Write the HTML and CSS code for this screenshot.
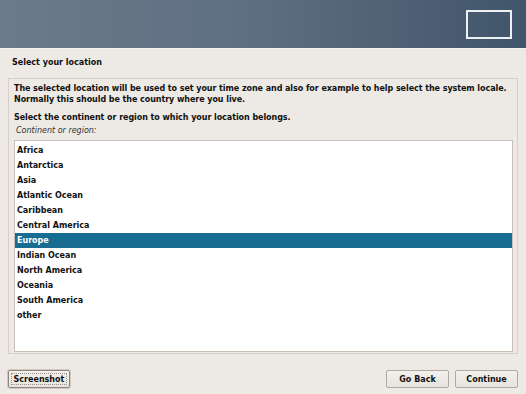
FILE: index.html
```html
<!DOCTYPE html>
<html lang="en">
<head>
  <meta charset="UTF-8">
  <title>Select your location</title>
  <link rel="stylesheet" href="styles.css">
</head>
<body>
  <header class="banner">
    <div class="logo-box"></div>
  </header>

  <h1 class="step-title">Select your location</h1>

  <section class="panel">
    <p class="intro">The selected location will be used to set your time zone and also for example to help select the system locale.<br>Normally this should be the country where you live.</p>
    <p class="question">Select the continent or region to which your location belongs.</p>
    <div class="list-label">Continent or region:</div>
    <ul class="region-list">
      <li>Africa</li>
      <li>Antarctica</li>
      <li>Asia</li>
      <li>Atlantic Ocean</li>
      <li>Caribbean</li>
      <li>Central America</li>
      <li class="selected">Europe</li>
      <li>Indian Ocean</li>
      <li>North America</li>
      <li>Oceania</li>
      <li>South America</li>
      <li>other</li>
    </ul>
  </section>

  <footer class="actions">
    <button class="btn btn-focus"><span>Screenshot</span></button>
    <div class="nav-buttons">
      <button class="btn">Go Back</button>
      <button class="btn">Continue</button>
    </div>
  </footer>
</body>
</html>
```

FILE: styles.css
```css
* {
  box-sizing: border-box;
}

body {
  margin: 0;
  width: 526px;
  height: 394px;
  background: #edeae5;
  color: #111;
  font-family: "DejaVu Sans", sans-serif;
  font-size: 8px;
  font-weight: bold;
  overflow: hidden;
}

.banner {
  height: 49px;
  background: linear-gradient(90deg, #6c7a89 0%, #5f7083 45%, #41556a 100%);
  border-bottom: 1px solid #f6f4f1;
  display: flex;
  justify-content: flex-end;
  align-items: flex-start;
  padding: 10px 14px 0 0;
}

.logo-box {
  width: 46px;
  height: 29px;
  border: 2px solid #eef1f4;
}

.step-title {
  margin: 0;
  font-size: 8px;
  line-height: 11px;
  padding: 8px 0 0 12px;
  height: 29px;
}

.panel {
  margin: 0 8px;
  height: 276px;
  border: 1px solid #d6d0c8;
  padding: 4px 4px 0 5px;
}

.intro {
  margin: 0;
  line-height: 11px;
  white-space: nowrap;
  letter-spacing: -0.06px;
}

.question {
  margin: 7px 0 0;
  line-height: 11px;
  letter-spacing: -0.06px;
}

.list-label {
  font-style: italic;
  font-weight: normal;
  color: #333;
  line-height: 11px;
  padding: 2px 0 0 2px;
}

.region-list {
  list-style: none;
  margin: 4px 0 0;
  height: 212px;
  background: #fff;
  border: 1px solid #c9bfb4;
  padding: 2px 0 0;
}

.region-list li {
  height: 15px;
  line-height: 15px;
  padding-left: 2px;
}

.region-list li.selected {
  background: #176c92;
  color: #fff;
}

.actions {
  display: flex;
  justify-content: space-between;
  padding: 16px 8px 0;
}

.nav-buttons {
  display: flex;
  gap: 6px;
}

.btn {
  height: 18px;
  width: 63px;
  padding: 0;
  font-family: "DejaVu Sans", sans-serif;
  font-size: 8px;
  font-weight: bold;
  color: #111;
  background: linear-gradient(#f3f1ed, #e7e3dd);
  border: 1px solid #b1a99f;
  border-radius: 2px;
}

.btn-focus {
  width: 62px;
  border: 1px solid #8f877d;
  box-shadow: 0 0 0 1px #cfc8be;
  padding: 2px;
}

.btn-focus span {
  display: block;
  height: 100%;
  line-height: 11px;
  border: 1px dotted #9a9288;
}
```
